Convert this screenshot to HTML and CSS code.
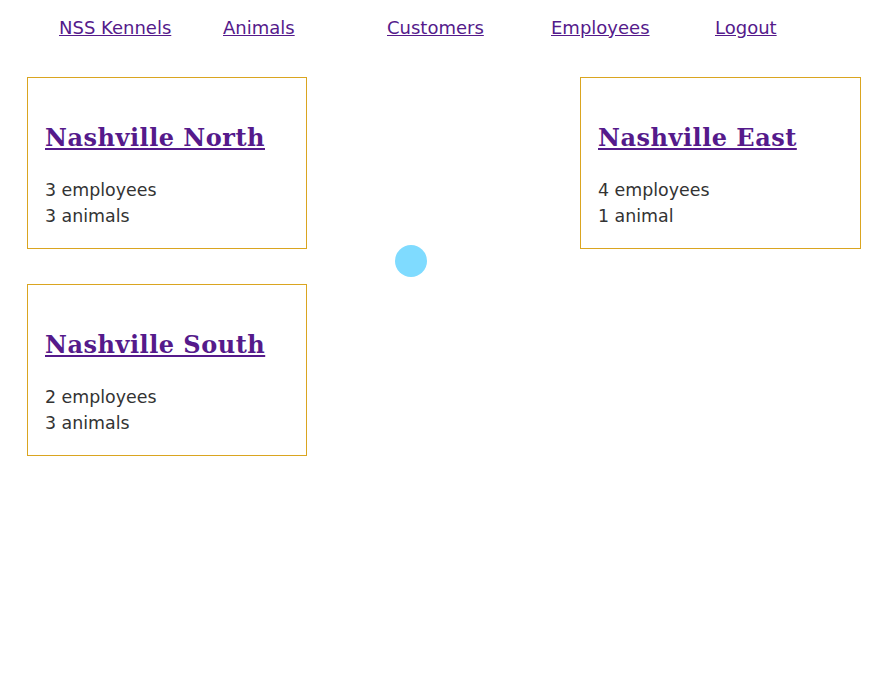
FILE: index.html
```html
<!DOCTYPE html>
<html>
<head>
<meta charset="utf-8">
<link rel="stylesheet" href="styles.css">
</head>
<body>
<nav class="navbar">
  <a class="nav-link" href="#">NSS Kennels</a>
  <a class="nav-link" href="#">Animals</a>
  <a class="nav-link" href="#">Customers</a>
  <a class="nav-link" href="#">Employees</a>
  <a class="nav-link" href="#">Logout</a>
</nav>
<main class="locations">
  <section class="location">
    <h2 class="location-name"><a href="#">Nashville North</a></h2>
    <div class="location-stat">3 employees</div>
    <div class="location-stat">3 animals</div>
  </section>
  <div class="spacer"></div>
  <section class="location">
    <h2 class="location-name"><a href="#">Nashville East</a></h2>
    <div class="location-stat">4 employees</div>
    <div class="location-stat">1 animal</div>
  </section>
  <section class="location">
    <h2 class="location-name"><a href="#">Nashville South</a></h2>
    <div class="location-stat">2 employees</div>
    <div class="location-stat">3 animals</div>
  </section>
  <span class="dot"></span>
</main>
</body>
</html>
```

FILE: styles.css
```css
html, body {
  margin: 0;
  padding: 0;
  background: #fff;
}
body {
  font-family: "DejaVu Sans", sans-serif;
  color: #333;
}
a {
  color: #551a8b;
}
.navbar {
  display: grid;
  grid-template-columns: repeat(5, 164px);
  padding: 17px 0 0 59px;
  height: 61px;
  box-sizing: border-box;
}
.nav-link {
  font-size: 18px;
  line-height: 22px;
  justify-self: start;
}
.locations {
  position: relative;
  display: grid;
  grid-template-columns: 280px 1fr 281px;
  row-gap: 35px;
  padding: 16px 25px 0 27px;
}
.location {
  border: 1px solid #daa520;
  padding: 44px 17px 0;
  height: 172px;
  box-sizing: border-box;
}
.location-name {
  font-family: "DejaVu Serif", serif;
  font-weight: bold;
  font-size: 24px;
  line-height: 32px;
  margin: 0 0 23px;
  letter-spacing: 0.5px;
}
.location-stat {
  font-size: 17.4px;
  line-height: 26px;
}
.dot {
  position: absolute;
  left: 395px;
  top: 184px;
  width: 32px;
  height: 32px;
  border-radius: 50%;
  background: #7fdbff;
}
```
